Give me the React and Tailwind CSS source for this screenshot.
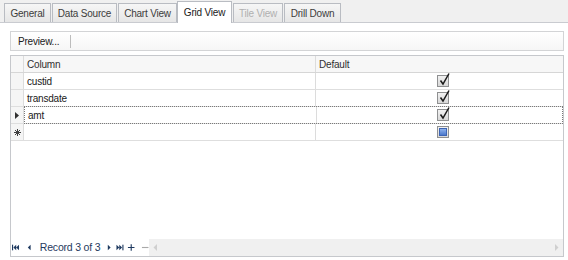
import React from "react";

const tabs = [
    { label: "General", w: "w-[47px]" },
    { label: "Data Source", w: "w-[65px]" },
    { label: "Chart View", w: "w-[59px]" },
    { label: "Grid View", w: "w-[55px]", active: true },
    { label: "Tile View", w: "w-[50px]", disabled: true },
    { label: "Drill Down", w: "w-[57px]" },
];

const rows = [
    { name: "custid", checked: true },
    { name: "transdate", checked: true },
    { name: "amt", checked: true, focused: true },
];

const CheckBox = ({ blue }) => (
    <div className="relative w-[12px] h-[12px] border border-[#8f9091] bg-gradient-to-b from-[#f2f2f2] to-[#d8d8d8] flex items-center justify-center">
        {blue ? (
            <div className="w-[8px] h-[8px] border border-[#3c64b4] bg-gradient-to-b from-[#8fb2ec] to-[#4b78cc]" />
        ) : (
            <svg className="absolute left-[1px] top-[-3px]" width="11" height="13" viewBox="0 0 11 13">
                <path d="M1.5 7.5 L4 11 L10 0.5" fill="none" stroke="#1a1a1a" strokeWidth="1.5" />
            </svg>
        )}
    </div>
);

const NavIcon = ({ children, className }) => (
    <svg className={className} width="9" height="9" viewBox="0 0 9 9">
        {children}
    </svg>
);

const App = () => {
    return (
        <div className="w-[568px] h-[260px] bg-white overflow-hidden font-['Liberation_Sans',Arial,sans-serif] text-[10px] tracking-[-0.2px] text-[#202020] whitespace-nowrap">
            {/* tab strip */}
            <div className="h-[23px] bg-[#f0f0f0] border-b border-[#c9cbd0] flex items-end pl-[3px]">
                {tabs.map((t) =>
                    t.active ? (
                        <div
                            key={t.label}
                            className={`${t.w} h-[22px] mb-[-1px] bg-white border border-b-0 border-[#b9bcc2] flex items-center justify-center pb-[1px]`}
                        >
                            {t.label}
                        </div>
                    ) : (
                        <div
                            key={t.label}
                            className={`${t.w} h-[19px] ml-[1px] bg-gradient-to-b from-[#f6f6f6] to-[#e6e6e6] border border-b-0 border-[#b9bcc2] flex items-center justify-center ${
                                t.disabled ? "text-[#b0b0b0]" : "text-[#3c3c3c]"
                            }`}
                        >
                            {t.label}
                        </div>
                    )
                )}
            </div>

            <div className="pl-[10px] pr-[4px] pt-[8px]">
                {/* toolbar */}
                <div className="h-[20px] border border-[#d3d4d6] bg-gradient-to-b from-white to-[#f6f6f6] flex items-center">
                    <span className="pl-[7px] pr-[11px]">Preview...</span>
                    <div className="w-[1px] h-[13px] bg-[#bcbcbc]" />
                </div>

                {/* grid */}
                <div className="mt-[4px] h-[202px] border border-[#c6c8cc] flex flex-col">
                    <div className="h-[17px] flex bg-[#f7f7f7] border-b border-[#d6d6d6] text-[#303030]">
                        <div className="w-[13px] border-r border-[#dcdcdc]" />
                        <div className="w-[292px] border-r border-[#dcdcdc] pl-[3px] flex items-center">Column</div>
                        <div className="flex-1 pl-[3px] flex items-center">Default</div>
                    </div>

                    {rows.map((r) => (
                        <div key={r.name} className="h-[17px] flex border-b border-[#dedede]">
                            <div className="w-[13px] bg-[#f5f5f5] border-r border-[#dcdcdc] flex items-center justify-center">
                                {r.focused && (
                                    <svg width="4" height="7" viewBox="0 0 4 7">
                                        <path d="M0 0 L4 3.5 L0 7 Z" fill="#303030" />
                                    </svg>
                                )}
                            </div>
                            <div
                                className={`flex-1 flex ${
                                    r.focused ? "border border-dotted border-[#7a7a7a] -my-[1px]" : ""
                                }`}
                            >
                                <div className="w-[292px] border-r border-[#dcdcdc] pl-[3px] flex items-center">{r.name}</div>
                                <div className="flex-1 flex items-center justify-center pl-[6px]">
                                    <CheckBox />
                                </div>
                            </div>
                        </div>
                    ))}

                    <div className="h-[17px] flex border-b border-[#dedede]">
                        <div className="w-[13px] bg-[#f5f5f5] border-r border-[#dcdcdc] flex items-center justify-center">
                            <svg width="7" height="7" viewBox="0 0 7 7">
                                <path d="M3.5 0 V7 M0 3.5 H7 M1 1 L6 6 M6 1 L1 6" stroke="#404040" strokeWidth="1" />
                            </svg>
                        </div>
                        <div className="w-[292px] border-r border-[#dcdcdc]" />
                        <div className="flex-1 flex items-center justify-center pl-[6px]">
                            <CheckBox blue />
                        </div>
                    </div>

                    <div className="flex-1" />

                    {/* navigator */}
                    <div className="h-[17px] flex items-center text-[#1f3a60]">
                        <div className="flex items-center pl-[1px] w-[138px]">
                            <NavIcon>
                                <rect x="0" y="1.5" width="1.2" height="6" fill="#1f3a60" />
                                <path d="M1.5 4.5 L4.5 1.5 L4.5 7.5 Z M4.5 4.5 L7.5 1.5 L7.5 7.5 Z" fill="#1f3a60" />
                            </NavIcon>
                            <NavIcon className="ml-[5px]">
                                <path d="M3 4.5 L6 1.5 L6 7.5 Z" fill="#1f3a60" />
                            </NavIcon>
                            <span className="ml-[6px] text-[10.5px]">Record 3 of 3</span>
                            <NavIcon className="ml-[5px]">
                                <path d="M3 1.5 L6 4.5 L3 7.5 Z" fill="#1f3a60" />
                            </NavIcon>
                            <NavIcon className="ml-[2px]">
                                <path d="M0.5 1.5 L3.5 4.5 L0.5 7.5 Z M3.5 1.5 L6.5 4.5 L3.5 7.5 Z" fill="#1f3a60" />
                                <rect x="6.8" y="1.5" width="1.2" height="6" fill="#1f3a60" />
                            </NavIcon>
                            <NavIcon className="ml-[3px]">
                                <path d="M4.5 1 V8 M1 4.5 H8" stroke="#1f3a60" strokeWidth="1.2" />
                            </NavIcon>
                            <NavIcon className="ml-[5px]">
                                <path d="M1 4.5 H8" stroke="#a9a9a9" strokeWidth="1.2" />
                            </NavIcon>
                        </div>
                        <div className="flex-1 h-full bg-[#f0f0f0] flex items-center justify-between px-[4px]">
                            <svg width="5" height="7" viewBox="0 0 5 7">
                                <path d="M4 0 L0.5 3.5 L4 7 Z" fill="#cfcfcf" />
                            </svg>
                            <svg width="5" height="7" viewBox="0 0 5 7">
                                <path d="M1 0 L4.5 3.5 L1 7 Z" fill="#cfcfcf" />
                            </svg>
                        </div>
                    </div>
                </div>
            </div>
        </div>
    );
};

export default App;
